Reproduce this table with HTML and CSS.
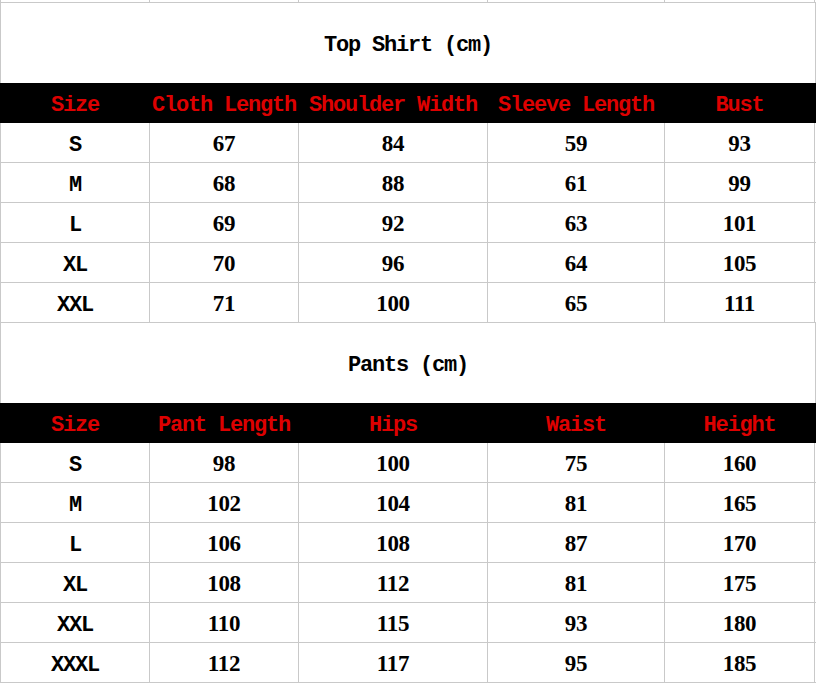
FILE: index.html
```html
<!DOCTYPE html>
<html>
<head>
<meta charset="utf-8">
<link rel="stylesheet" href="styles.css">
</head>
<body>
<div class="sheet">
  <div class="row strip"><div class="c"></div><div class="c"></div><div class="c"></div><div class="c"></div><div class="c"></div></div>
  <div class="title">Top Shirt (cm)</div>
  <div class="row head"><div class="c">Size</div><div class="c">Cloth Length</div><div class="c">Shoulder Width</div><div class="c">Sleeve Length</div><div class="c">Bust</div></div>
  <div class="row"><div class="c">S</div><div class="c n">67</div><div class="c n">84</div><div class="c n">59</div><div class="c n">93</div></div>
  <div class="row"><div class="c">M</div><div class="c n">68</div><div class="c n">88</div><div class="c n">61</div><div class="c n">99</div></div>
  <div class="row"><div class="c">L</div><div class="c n">69</div><div class="c n">92</div><div class="c n">63</div><div class="c n">101</div></div>
  <div class="row"><div class="c">XL</div><div class="c n">70</div><div class="c n">96</div><div class="c n">64</div><div class="c n">105</div></div>
  <div class="row"><div class="c">XXL</div><div class="c n">71</div><div class="c n">100</div><div class="c n">65</div><div class="c n">111</div></div>
  <div class="title">Pants (cm)</div>
  <div class="row head"><div class="c">Size</div><div class="c">Pant Length</div><div class="c">Hips</div><div class="c">Waist</div><div class="c">Height</div></div>
  <div class="row"><div class="c">S</div><div class="c n">98</div><div class="c n">100</div><div class="c n">75</div><div class="c n">160</div></div>
  <div class="row"><div class="c">M</div><div class="c n">102</div><div class="c n">104</div><div class="c n">81</div><div class="c n">165</div></div>
  <div class="row"><div class="c">L</div><div class="c n">106</div><div class="c n">108</div><div class="c n">87</div><div class="c n">170</div></div>
  <div class="row"><div class="c">XL</div><div class="c n">108</div><div class="c n">112</div><div class="c n">81</div><div class="c n">175</div></div>
  <div class="row"><div class="c">XXL</div><div class="c n">110</div><div class="c n">115</div><div class="c n">93</div><div class="c n">180</div></div>
  <div class="row"><div class="c">XXXL</div><div class="c n">112</div><div class="c n">117</div><div class="c n">95</div><div class="c n">185</div></div>
</div>
</body>
</html>
```
FILE: styles.css
```css
html, body {
  margin: 0;
  padding: 0;
  background: #ffffff;
}
.sheet {
  width: 815px;
  border-left: 1px solid #c9c9c9;
  font-family: "Liberation Mono", "DejaVu Sans Mono", monospace;
  font-weight: bold;
  font-size: 22px;
  letter-spacing: -1.2px;
  color: #000;
}
.row {
  display: grid;
  grid-template-columns: 149px 149px 189px 177px 150px;
  height: 40px;
  box-sizing: border-box;
  border-bottom: 1px solid #c9c9c9;
}
.c {
  box-sizing: border-box;
  border-right: 1px solid #c9c9c9;
  display: flex;
  align-items: center;
  justify-content: center;
  padding-top: 5px;
  white-space: nowrap;
}
.n {
  font-family: "Liberation Serif", "Times New Roman", serif;
  font-size: 23px;
  letter-spacing: -0.3px;
  padding-top: 3px;
}
.strip {
  height: 3px;
}
.strip .c {
  padding: 0;
}
.title {
  height: 79px;
  box-sizing: border-box;
  border-right: 1px solid #c9c9c9;
  display: flex;
  align-items: center;
  justify-content: center;
  padding-top: 4px;
}
.row + .title {
  height: 80px;
}
.head {
  background: #000;
  color: #dd0000;
  border-bottom-color: #000;
  margin-left: -1px;
  padding-left: 1px;
}
.head .c {
  border-right-color: #000;
}
```
